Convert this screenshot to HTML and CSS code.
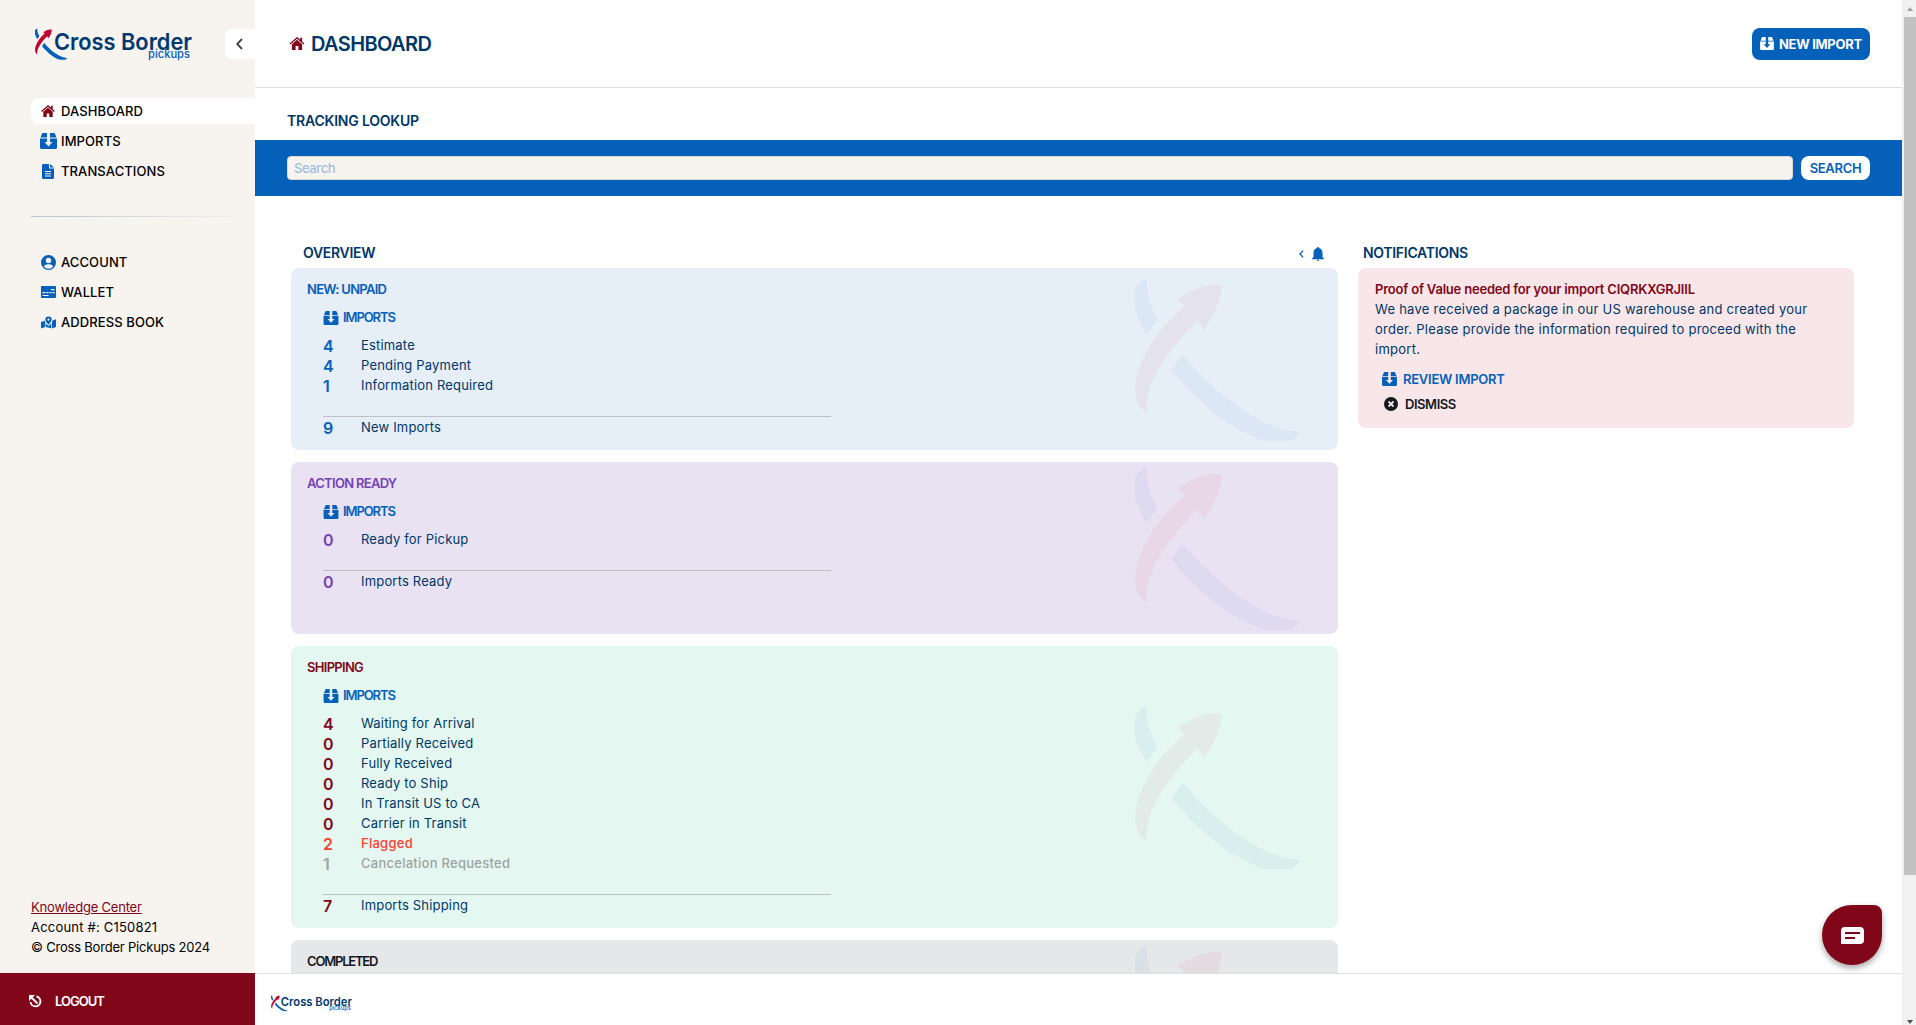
FILE: index.html
```
<!DOCTYPE html>
<html lang="en">
<head>
  <meta charset="UTF-8" />
  <meta name="viewport" content="width=device-width, initial-scale=1" />
  <title>Dashboard - Cross Border Pickups</title>
  <link rel="stylesheet" href="styles.css">
</head>
<body>
  <svg class="sprite" aria-hidden="true">
    <symbol id="mark" viewBox="0 0 495 488">
      <path class="mark-blue" d="M36 0C-10 18-14 62 9 118L34 170 67 123C48 86 31 50 36 0Z"/>
      <path class="mark-red" d="M127 63C168 38 210 14 261 22C256 72 236 115 208 154L187 126C92 224 22 326 36 406C-3 382-8 330 12 272C40 196 92 132 150 83Z"/>
      <path class="mark-blue" d="M143 230L109 277C200 380 280 452 388 488L462 488C478 484 488 474 495 459C410 464 262 374 143 230Z"/>
    </symbol>
    <symbol id="logo" viewBox="0 0 157 33">
      <use href="#mark" x="0" y="0" width="32" height="32"/>
      <text class="logo-name" x="19" y="22" textLength="138" lengthAdjust="spacingAndGlyphs">Cross Border</text>
      <text class="logo-sub" x="113" y="30" textLength="42" lengthAdjust="spacingAndGlyphs">pickups</text>
    </symbol>
    <symbol id="home" viewBox="0 0 16 14">
      <path d="M8 0L0 7l1 1.100 7-6.200 7 6.200L16 7l-2.500-2.200V.8h-2V3z"/>
      <path d="M8 3L2.500 7.900V14h4V9.800h3V14h4V7.900z"/>
    </symbol>
    <symbol id="box" viewBox="0 0 17 16">
      <path d="M3 0h4v4.500H.5L2 .8Q2.300 0 3 0zM10 0h4q.7 0 1 .8l1.500 3.700H10z"/>
      <path d="M0 5.500h7V9H4.500l4 4.500 4-4.500H10V5.500h7V14.500Q17 16 15.500 16h-14Q0 16 0 14.500z"/>
    </symbol>
    <symbol id="file" viewBox="0 0 12 15">
      <path fill-rule="evenodd" d="M1.500 0H7v4.500h5v9q0 1.500-1.500 1.500h-9Q0 15 0 13.500v-12Q0 0 1.500 0zM3 7v1h6V7zm0 2.300v1h6v-1zm0 2.300v1h6v-1zM8 0l4 3.600H8z"/>
    </symbol>
    <symbol id="user" viewBox="0 0 16 16">
      <path fill-rule="evenodd" d="M8 0a8 8 0 1 1 0 16A8 8 0 0 1 8 0zm0 3a2.900 2.900 0 1 0 0 5.800A2.900 2.900 0 0 0 8 3zM3 12.200a6.400 6.400 0 0 0 10 0C12 10.300 10 9.900 8 9.900s-4 .4-5 2.300z"/>
    </symbol>
    <symbol id="card" viewBox="0 0 15 12">
      <path fill-rule="evenodd" d="M1 0h13q1 0 1 1v10q0 1-1 1H1q-1 0-1-1V1Q0 0 1 0zM10 3v1.200h3.500V3zM1.500 6v1.200h3V6zm4 0v1.200h2V6zm3 0v1.200h2V6zm3 0v1.200h2V6zm-10 3v1h6V9z"/>
    </symbol>
    <symbol id="map" viewBox="0 0 16 13">
      <path fill-rule="evenodd" d="M8 0a3.400 3.400 0 0 1 3.400 3.400C11.400 5.500 8 9 8 9S4.600 5.500 4.600 3.400A3.400 3.400 0 0 1 8 0zm0 2.200a1.200 1.200 0 1 0 0 2.400 1.200 1.200 0 0 0 0-2.400z"/>
      <path d="M0 6l3.800-1.500L4.500 6v5.300L0 13zM5.200 7.500L8 10.300l2.800-2.800v5.200L5.200 11.200zM11.600 6.500l1-2.500L16 3v8.300L11.600 13z"/>
    </symbol>
    <symbol id="bell" viewBox="0 0 12 14">
      <path d="M6 0q1 0 1 1Q10.500 2 10.500 6v4l1.500 1.500v.8H0v-.8L1.500 10V6Q1.500 2 5 1 5 0 6 0zM4.800 12.800h2.400Q7 14 6 14t-1.200-1.200z"/>
    </symbol>
    <symbol id="close" viewBox="0 0 14 14">
      <circle cx="7" cy="7" r="7"/>
      <path class="close-x" d="M4.500 4.500l5 5m0-5l-5 5"/>
    </symbol>
    <symbol id="chevron" viewBox="0 0 7 12">
      <path class="stroke" d="M6 1L1.200 6 6 11"/>
    </symbol>
    <symbol id="exit" viewBox="0 0 13 13">
      <path class="stroke" d="M7.500 1.500a5 5 0 1 1-6 5.500M2.500 2.500l6 6"/>
      <path d="M0 0h6L0 6z"/>
    </symbol>
    <symbol id="chat" viewBox="0 0 23 17">
      <path fill-rule="evenodd" d="M4 0h15q4 0 4 4v9q0 4-4 4H0V4q0-4 4-4zm0 5v2h15V5zm0 5v2h10v-2z"/>
    </symbol>
  </svg>

  <div class="app">
    <aside class="sidebar">
      <div class="brand">
        <svg class="logo"><use href="#logo"/></svg>
        <button class="collapse"><svg><use href="#chevron"/></svg></button>
      </div>
      <nav class="menu">
        <a class="menu-item active"><span class="menu-icon"><svg class="i-home"><use href="#home"/></svg></span>DASHBOARD</a>
        <a class="menu-item"><span class="menu-icon"><svg class="i-box"><use href="#box"/></svg></span>IMPORTS</a>
        <a class="menu-item"><span class="menu-icon"><svg class="i-file"><use href="#file"/></svg></span>TRANSACTIONS</a>
      </nav>
      <div class="divider"></div>
      <nav class="menu">
        <a class="menu-item"><span class="menu-icon"><svg class="i-user"><use href="#user"/></svg></span>ACCOUNT</a>
        <a class="menu-item"><span class="menu-icon"><svg class="i-card"><use href="#card"/></svg></span>WALLET</a>
        <a class="menu-item"><span class="menu-icon"><svg class="i-map"><use href="#map"/></svg></span>ADDRESS BOOK</a>
      </nav>
      <div class="info">
        <a class="help">Knowledge Center</a>
        <p class="account">Account #: C150821</p>
        <p>© Cross Border Pickups 2024</p>
      </div>
      <a class="logout"><svg><use href="#exit"/></svg>LOGOUT</a>
    </aside>

    <main class="main">
      <header class="topbar">
        <h1><svg><use href="#home"/></svg>DASHBOARD</h1>
        <button class="new-import"><svg><use href="#box"/></svg>NEW IMPORT</button>
      </header>

      <div class="content">
        <h2 class="lookup-title">TRACKING LOOKUP</h2>
        <div class="lookup">
          <input type="text" placeholder="Search" />
          <button>SEARCH</button>
        </div>

        <div class="columns">
          <section class="overview">
            <div class="section-head">
              <h2>OVERVIEW</h2>
              <div class="toggle">
                <svg class="i-chevron"><use href="#chevron"/></svg>
                <svg class="i-bell"><use href="#bell"/></svg>
              </div>
            </div>

            <div class="card unpaid">
              <h3>NEW: UNPAID</h3>
              <h4><svg><use href="#box"/></svg>IMPORTS</h4>
              <ul>
                <li><b>4</b>Estimate</li>
                <li><b>4</b>Pending Payment</li>
                <li><b>1</b>Information Required</li>
              </ul>
              <div class="total"><b>9</b>New Imports</div>
              <svg class="watermark"><use href="#mark"/></svg>
            </div>

            <div class="card ready">
              <h3>ACTION READY</h3>
              <h4><svg><use href="#box"/></svg>IMPORTS</h4>
              <ul>
                <li><b>0</b>Ready for Pickup</li>
              </ul>
              <div class="total"><b>0</b>Imports Ready</div>
              <svg class="watermark"><use href="#mark"/></svg>
            </div>

            <div class="card shipping">
              <h3>SHIPPING</h3>
              <h4><svg><use href="#box"/></svg>IMPORTS</h4>
              <ul>
                <li><b>4</b>Waiting for Arrival</li>
                <li><b>0</b>Partially Received</li>
                <li><b>0</b>Fully Received</li>
                <li><b>0</b>Ready to Ship</li>
                <li><b>0</b>In Transit US to CA</li>
                <li><b>0</b>Carrier in Transit</li>
                <li class="flagged"><b>2</b>Flagged</li>
                <li class="canceled"><b>1</b>Cancelation Requested</li>
              </ul>
              <div class="total"><b>7</b>Imports Shipping</div>
              <svg class="watermark"><use href="#mark"/></svg>
            </div>

            <div class="card completed">
              <h3>COMPLETED</h3>
              <svg class="watermark"><use href="#mark"/></svg>
            </div>
          </section>

          <section class="notifications">
            <div class="section-head">
              <h2>NOTIFICATIONS</h2>
            </div>
            <div class="notice">
              <h3>Proof of Value needed for your import CIQRKXGRJIIL</h3>
              <p>We have received a package in our US warehouse and created your order. Please provide the information required to proceed with the import.</p>
              <a class="review"><svg><use href="#box"/></svg>REVIEW IMPORT</a>
              <a class="dismiss"><svg><use href="#close"/></svg>DISMISS</a>
            </div>
          </section>
        </div>
      </div>

      <footer class="footer">
        <svg class="logo-small"><use href="#logo"/></svg>
      </footer>
    </main>

    <div class="scrollbar">
      <span class="arrow up"></span>
      <span class="thumb"></span>
      <span class="arrow down"></span>
    </div>
  </div>

  <button class="chat"><svg><use href="#chat"/></svg></button>
</body>
</html>
```
FILE: styles.css
```
* {
  box-sizing: border-box;
}
body {
  margin: 0;
  font-family: Inter, sans-serif;
  font-size: 13px;
  line-height: 20px;
  color: #003767;
  background: #fff;
  overflow: hidden;
}
h1, h2, h3, h4, p, ul {
  margin: 0;
  padding: 0;
}
button {
  font-family: inherit;
  border: none;
  cursor: pointer;
}
svg {
  fill: currentColor;
  flex: none;
}
.sprite {
  display: none;
}
.stroke {
  fill: none;
  stroke: currentColor;
  stroke-width: 1.9;
}
.close-x {
  stroke: #f8e5e8;
  stroke-width: 1.8;
}
.mark-blue {
  fill: #0560b9;
}
.mark-red {
  fill: #c3002f;
}
.logo-name {
  font-size: 23px;
  font-weight: 600;
  fill: #003a70;
}
.logo-sub {
  font-size: 12px;
  font-weight: 500;
  fill: #0560b9;
}

.app {
  display: flex;
  height: 100vh;
}

/* sidebar */
.sidebar {
  width: 255px;
  display: flex;
  flex-direction: column;
  background: #f7f3ee;
  color: #000;
}
.brand {
  display: flex;
  justify-content: space-between;
  height: 98px;
  padding: 28px 0 0 35px;
}
.logo {
  width: 157px;
  height: 33px;
}
.collapse {
  display: flex;
  align-items: center;
  width: 30px;
  height: 30px;
  margin-top: 1px;
  padding: 0 0 0 11px;
  border-radius: 8px 0 0 8px;
  background: #fff;
  color: #444;
}
.collapse svg {
  width: 7px;
  height: 12px;
}
.menu {
  display: flex;
  flex-direction: column;
  gap: 4px;
  padding-left: 31px;
}
.menu-item {
  display: flex;
  align-items: center;
  height: 26px;
  padding: 0 0 1px 8px;
  border-radius: 8px 0 0 8px;
  font-weight: 500;
  letter-spacing: 0.1px;
}
.menu-item.active {
  background: #fff;
}
.menu-icon {
  display: flex;
  justify-content: center;
  width: 18px;
  margin: 1px 4px 0 0;
  color: #0560b9;
}
.active .menu-icon {
  color: #80071a;
}
.i-home {
  width: 14px;
  height: 12px;
}
.i-box {
  width: 17px;
  height: 16px;
}
.i-file {
  width: 12px;
  height: 15px;
}
.i-user {
  width: 15px;
  height: 15px;
}
.i-card {
  width: 15px;
  height: 12px;
}
.i-map {
  width: 15px;
  height: 13px;
}
.divider {
  height: 1px;
  margin: 32px 0 32px 31px;
  background: linear-gradient(to right, #b5c5d2, #f7f3ee);
}
.info {
  margin: auto 0 16px 31px;
  letter-spacing: -0.2px;
}
.info .account {
  letter-spacing: 0.2px;
}
.help {
  color: #80071a;
  text-decoration: underline;
}
.logout {
  display: flex;
  align-items: center;
  gap: 13px;
  height: 52px;
  padding: 4px 0 0 29px;
  background: #80071a;
  color: #fff;
  font-weight: 600;
  letter-spacing: -1px;
}
.logout svg {
  width: 13px;
  height: 13px;
}

/* main area */
.main {
  flex: 1;
  display: flex;
  flex-direction: column;
  min-width: 0;
}
.topbar {
  display: flex;
  justify-content: space-between;
  align-items: center;
  height: 88px;
  padding: 0 32px;
  border-bottom: 1px solid #dee0e2;
}
h1 {
  display: flex;
  align-items: center;
  gap: 6px;
  font-size: 20px;
  font-weight: 600;
  letter-spacing: -0.6px;
}
h1 svg {
  width: 16px;
  height: 13px;
  margin-left: 2px;
  color: #80071a;
}
.new-import {
  display: flex;
  align-items: center;
  gap: 5px;
  width: 118px;
  height: 32px;
  padding: 0 8px;
  border-radius: 8px;
  background: #0560b9;
  color: #fff;
  font-size: 13px;
  font-weight: 700;
  letter-spacing: -0.3px;
  white-space: nowrap;
}
.new-import svg {
  width: 14px;
  height: 13px;
}
.content {
  flex: 1;
  min-height: 0;
  overflow: hidden;
}
h2 {
  font-size: 14px;
  font-weight: 600;
  letter-spacing: -0.3px;
}
.lookup-title {
  padding: 23px 32px 9px;
  letter-spacing: -0.2px;
}
.lookup {
  display: flex;
  gap: 8px;
  height: 56px;
  padding: 16px 32px;
  background: #0560b9;
}
.lookup input {
  flex: 1;
  height: 24px;
  padding: 0 6px;
  border: 1px solid #ddd8d2;
  border-radius: 4px;
  background: #f7f3ee;
  font-family: inherit;
  font-size: 13px;
  font-weight: 500;
  letter-spacing: -0.4px;
}
.lookup input::placeholder {
  color: #9fc0e2;
}
.lookup button {
  width: 69px;
  height: 24px;
  padding: 0;
  border-radius: 8px;
  background: #fff;
  color: #0560b9;
  font-size: 13px;
  font-weight: 600;
  letter-spacing: -0.3px;
}
.columns {
  display: flex;
  gap: 20px;
  padding: 44px 48px 0 36px;
}
.overview {
  width: 1047px;
}
.notifications {
  width: 496px;
}
.section-head {
  display: flex;
  justify-content: space-between;
  height: 28px;
  padding: 3px 14px 0 12px;
}
.notifications .section-head {
  padding-left: 5px;
}
.toggle {
  display: flex;
  align-items: center;
  gap: 8px;
  height: 22px;
  color: #0560b9;
}
.i-chevron {
  width: 5px;
  height: 8px;
}
.i-bell {
  width: 12px;
  height: 14px;
}

/* overview cards */
.card {
  position: relative;
  min-height: 172px;
  margin-bottom: 12px;
  padding: 11px 16px 13px;
  border-radius: 8px;
  letter-spacing: 0.18px;
}
.card h3 {
  font-size: 13px;
  font-weight: 600;
  letter-spacing: -0.7px;
}
.card h4 {
  display: flex;
  align-items: center;
  gap: 4px;
  margin: 8px 16px;
  font-size: 13px;
  font-weight: 600;
  letter-spacing: -1.1px;
  color: #0560b9;
}
.card h4 svg {
  width: 16px;
  height: 14px;
  margin-top: 1px;
}
.card ul {
  margin: 0 16px 21px;
  list-style: none;
}
.card li,
.total {
  display: flex;
  height: 20px;
}
.card b {
  width: 38px;
  padding-top: 1px;
  font-size: 16px;
  font-weight: 600;
}
.total {
  width: 508px;
  height: 21px;
  margin-left: 16px;
  border-top: 1px solid #bcc0c4;
}
.watermark {
  position: absolute;
  right: 38px;
  top: 50%;
  width: 165px;
  height: 163px;
  margin-top: -81px;
  opacity: 0.042;
}
.unpaid {
  background: #e6eef8;
}
.unpaid h3,
.unpaid b {
  color: #0560b9;
}
.ready {
  background: #e9e2f3;
}
.ready h3,
.ready b {
  color: #7541b8;
}
.shipping {
  background: #e4f7f1;
}
.shipping h3,
.shipping b {
  color: #80071a;
}
.completed {
  background: #e6e7e9;
}
.completed h3 {
  color: #14191f;
  letter-spacing: -1.2px;
}
.card .flagged,
.card .flagged b {
  color: #fc4032;
}
.card .canceled,
.card .canceled b {
  color: #9fa4a3;
}
.flagged,
.canceled {
  font-weight: 500;
  letter-spacing: 0.26px;
}

/* notifications */
.notice {
  height: 160px;
  padding: 11px 17px;
  border-radius: 8px;
  background: #f8e6e8;
}
.notice h3 {
  font-size: 13px;
  font-weight: 600;
  letter-spacing: -0.2px;
  color: #80071a;
}
.notice p {
  padding-right: 20px;
  letter-spacing: 0.25px;
}
.notice a {
  display: flex;
  align-items: center;
  font-weight: 600;
  letter-spacing: -0.25px;
}
.notice .review {
  gap: 6px;
  margin: 10px 0 5px 7px;
  color: #0560b9;
}
.review svg {
  width: 15px;
  height: 14px;
}
.notice .dismiss {
  gap: 7px;
  margin-left: 9px;
  letter-spacing: -0.45px;
  color: #14191f;
}
.dismiss svg {
  width: 14px;
  height: 14px;
}

.footer {
  height: 52px;
  padding: 21px 16px;
  border-top: 1px solid #dee0e2;
}
.logo-small {
  display: block;
  width: 81px;
  height: 17px;
}

/* page scrollbar */
.scrollbar {
  display: flex;
  flex-direction: column;
  align-items: center;
  width: 14px;
  padding-left: 2px;
  background: #f1f1f1;
}
.thumb {
  width: 12px;
  height: 858px;
  margin: 6px 0 auto;
  background: #c1c1c1;
}
.arrow {
  border: 3px solid transparent;
}
.arrow.up {
  margin-top: 5px;
  border-bottom: 4px solid #a3a3a3;
  border-top-width: 2px;
}
.arrow.down {
  border-top: 4px solid #505050;
  border-bottom-width: 0;
  margin-bottom: 1px;
}

.chat {
  position: fixed;
  right: 34px;
  bottom: 60px;
  display: flex;
  align-items: center;
  justify-content: center;
  width: 60px;
  height: 60px;
  border-radius: 50%;
  border-top-right-radius: 8px;
  background: #80071a;
  color: #fff;
  box-shadow: 0 3px 6px rgba(0,0,0,0.35);
}
.chat svg {
  width: 23px;
  height: 17px;
}
```
